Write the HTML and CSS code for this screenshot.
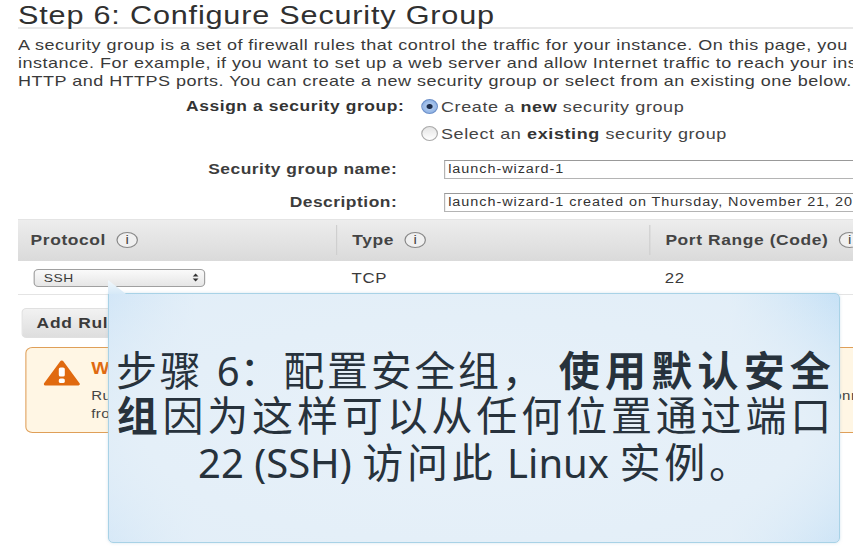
FILE: index.html
```html
<!DOCTYPE html>
<html lang="zh-CN">
<head>
<meta charset="utf-8">
<title>Step 6: Configure Security Group</title>
<link rel="stylesheet" href="styles.css">
</head>
<body>
<main class="page">
  <h1 class="title">Step 6: Configure Security Group</h1>
  <p class="intro">A security group is a set of firewall rules that control the traffic for your instance. On this page, you can add rules<br>instance. For example, if you want to set up a web server and allow Internet traffic to reach your instance, add rules<br>HTTP and HTTPS ports. You can create a new security group or select from an existing one below.</p>
  <div class="assign">
    <div class="assign-label">Assign a security group:</div>
    <div class="radios">
      <div class="radio-row"><span class="radio radio-on"></span><span>Create a <b>new</b> security group</span></div>
      <div class="radio-row"><span class="radio"></span><span>Select an <b>existing</b> security group</span></div>
    </div>
  </div>
  <div class="field">
    <div class="field-label">Security group name:</div>
    <div class="input">launch-wizard-1</div>
  </div>
  <div class="field">
    <div class="field-label">Description:</div>
    <div class="input">launch-wizard-1 created on Thursday, November 21, 2013</div>
  </div>
  <div class="thead">
    <div class="th th-protocol">Protocol <span class="info">i</span></div>
    <div class="th th-type">Type <span class="info">i</span></div>
    <div class="th th-port">Port Range (Code) <span class="info">i</span></div>
  </div>
  <div class="trow">
    <div class="td td-protocol"><div class="select"><span>SSH</span><span class="updown">
      <svg width="6" height="9" viewBox="0 0 6 9"><path d="M3 0.5 5.400 3.600H0.600ZM3 8.500 0.600 5.400H5.400Z" fill="#333"/></svg></span></div></div>
    <div class="td td-type">TCP</div>
    <div class="td td-port">22</div>
  </div>
  <div class="btn">Add Rule</div>
  <div class="warning">
    <svg class="warn-icon" width="31" height="26" viewBox="0 0 31 26"><path d="M15.500 2 29 24H2Z" fill="#e06a10" stroke="#e06a10" stroke-width="3" stroke-linejoin="round"/><rect x="13" y="7.500" width="5" height="9" rx="1.500" fill="#fff"/><rect x="13" y="18.500" width="5" height="4.500" rx="1.500" fill="#fff"/></svg>
    <div class="warn-text">
      <div class="warn-title">Warning</div>
      <div class="warn-body">Rules with source of 0.0.0.0/0 allow all IP addresses to access your instance. We recommend you only connect<br>from known IP addresses.</div>
    </div>
  </div>
</main>
<aside class="callout">
  <span class="tail"></span>
  <p class="callout-text"><span class="line1">步骤 <span class="latin">6</span>：配置安全组， <b>使用默认安全</b></span><br><b>组</b>因为这样可以从任何位置通过端口<br><span class="line3"><span class="latin">22 (SSH) </span>访问此<span class="latin"> Linux </span>实例。</span></p>
</aside>
</body>
</html>
```
FILE: styles.css
```css
* { box-sizing: border-box; }
html, body { margin: 0; padding: 0; }
body {
  position: relative;
  width: 853px;
  height: 554px;
  overflow: hidden;
  background: #fff;
  color: #333;
  font-family: "Liberation Sans", Arial, sans-serif;
}
/* The source is a video frame stretched horizontally: everything under the callout is 1.2x wide. */
.page {
  width: 711px;
  height: 554px;
  padding-left: 15px;
  transform: scaleX(1.2);
  transform-origin: 0 0;
}
.title {
  margin: 0;
  height: 29px;
  font-size: 25.500px;
  line-height: 30px;
  font-weight: 400;
  letter-spacing: 0.68px;
  color: #303030;
  border-bottom: 2px solid #e8e8e8;
  white-space: nowrap;
}
.intro {
  margin: 7px 0 0;
  font-size: 15px;
  line-height: 18px;
  letter-spacing: 0.41px;
  white-space: nowrap;
  color: #3a3a3a;
}
.assign { display: flex; margin-top: 5px; height: 53px; }
.assign-label {
  width: 322px;
  text-align: right;
  font-size: 14.500px;
  font-weight: 700;
  letter-spacing: 0.5px;
  line-height: 22px;
}
.radios { margin-left: 14px; }
.radio-row {
  display: flex;
  align-items: center;
  gap: 2.500px;
  height: 22px;
  margin-bottom: 5px;
  font-size: 15px;
  letter-spacing: 0.5px;
  color: #444;
  white-space: nowrap;
}
.radio-row b { color: #333; }
.radio {
  width: 14px;
  height: 15px;
  border-radius: 50%;
  border: 1px solid #aaa;
  background: linear-gradient(#e4e4e4, #fff);
}
.radio-on {
  border-color: #6b8fc9;
  background: radial-gradient(circle, #1c2c4a 0 2px, #a9c5ec 3px, #7ea6df 100%);
}
.field { display: flex; align-items: center; height: 24px; margin-top: 9px; }
.field-label {
  flex: none;
  width: 316px;
  text-align: right;
  font-size: 14.500px;
  font-weight: 700;
  letter-spacing: 0.42px;
  color: #3c3c3c;
  white-space: nowrap;
}
.input {
  flex: none;
  width: 345px;
  height: 19px;
  margin-left: 39px;
  padding-left: 2.500px;
  border: 1px solid #b4b4b4;
  border-top-color: #999;
  font-size: 12px;
  line-height: 17px;
  letter-spacing: 0.8px;
  color: #333;
  white-space: nowrap;
  overflow: hidden;
}
.thead {
  display: flex;
  align-items: center;
  width: 696px;
  height: 42px;
  margin-top: 5px;
  padding-bottom: 2px;
  background: linear-gradient(#ededed, #dadada);
  border-top: 1px solid #e4e4e4;
}
.th {
  flex: none;
  display: flex;
  align-items: center;
  gap: 9px;
  height: 30px;
  font-size: 14.500px;
  font-weight: 700;
  letter-spacing: 0.5px;
  color: #444;
  white-space: nowrap;
}
.th-protocol { width: 266px; padding-left: 10.500px; border-right: 1px solid #cfcfcf; }
.th-type { width: 261px; padding-left: 12.500px; border-right: 1px solid #cfcfcf; }
.th-port { padding-left: 12.500px; }
.info {
  display: inline-flex;
  align-items: center;
  justify-content: center;
  width: 18px;
  height: 16px;
  border-radius: 50%;
  border: 1px solid #888;
  background: #f0f0f0;
  font-size: 12.500px;
  font-weight: 400;
}
.trow {
  display: flex;
  align-items: center;
  width: 696px;
  height: 34px;
  border-bottom: 1px solid #e4e4e4;
  font-size: 14px;
  letter-spacing: 0.5px;
  color: #3a3a3a;
}
.td { flex: none; }
.td-protocol { width: 266px; padding-left: 12.500px; }
.td-type { width: 261px; padding-left: 12px; }
.td-port { padding-left: 12px; }
.select {
  display: flex;
  align-items: center;
  justify-content: space-between;
  width: 143px;
  height: 18px;
  padding: 0 2px 0 8px;
  border: 1px solid #a0a0a0;
  border-radius: 4px;
  background: linear-gradient(#fafafa, #e6e6e6);
  font-size: 11.500px;
  letter-spacing: 0.4px;
}
.updown { display: flex; width: 10px; justify-content: center; }
.btn {
  display: flex;
  align-items: center;
  width: 108px;
  height: 30px;
  margin: 13px 0 0 2.500px;
  padding-left: 12px;
  border-radius: 4px;
  border: 1px solid #e0e0e0;
  background: linear-gradient(#f2f2f2, #dedede);
  font-size: 14.500px;
  font-weight: 700;
  letter-spacing: 0.6px;
  color: #3a3a3a;
}
.warning {
  display: flex;
  width: 696px;
  height: 86px;
  margin: 9px 0 0 6px;
  padding: 12px 0 0 14px;
  border: 1px solid #df9f58;
  border-right: 0;
  border-radius: 6px 0 0 6px;
  background: #fff6e4;
}
.warn-icon { flex: none; }
.warn-text { margin-left: 9px; white-space: nowrap; }
.warn-title { font-size: 16px; font-weight: 700; color: #e06a10; letter-spacing: 0.5px; }
.warn-body { margin-top: 9px; font-size: 12.500px; line-height: 18px; color: #444; letter-spacing: 0.4px; }
.callout {
  position: absolute;
  left: 108px;
  top: 293px;
  width: 732px;
  height: 250px;
  border: 1px solid #a8d2e6;
  border-radius: 0 5px 5px 5px;
  box-shadow: 0 0 3px rgba(170, 200, 220, 0.5);
  background:
    radial-gradient(ellipse 75% 75% at 50% 55%, #e8f1f9 0%, #e4eff8 60%, rgba(228, 239, 248, 0) 100%),
    linear-gradient(90deg, #d2e6f7 0%, #e2eef8 12%, #e2eef8 85%, #c6e1f6 100%);
}
.tail {
  position: absolute;
  left: -1px;
  top: -14px;
  width: 18px;
  height: 14px;
  background: linear-gradient(#f2f8fc, #d6e9f7);
  clip-path: polygon(0 0, 100% 100%, 0 100%);
}
.callout-text {
  margin: 0;
  padding: 54px 0 0 4px;
  text-align: center;
  font-family: "Noto Sans", "Noto Sans CJK SC", sans-serif;
  font-size: 41px;
  line-height: 44px;
  letter-spacing: 3.850px;
  color: #27323c;
  white-space: nowrap;
}
.callout-text b { font-weight: 700; letter-spacing: 4.600px; }
.line1 { letter-spacing: 2.700px; }
.callout-text .line1 b { letter-spacing: 5.200px; }
.line3 { display: inline-block; margin-top: 3px; }
.latin { letter-spacing: 0; font-size: 40px; }
```
